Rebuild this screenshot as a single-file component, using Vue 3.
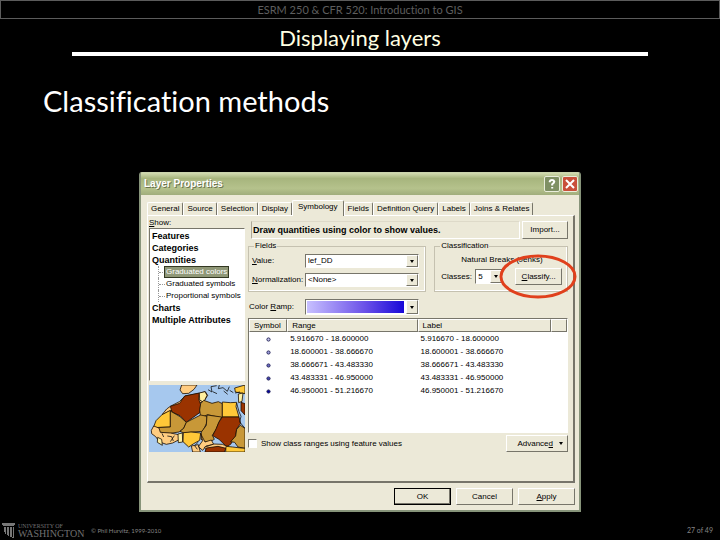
<script setup>
import { ref } from 'vue'

const tabs = ['General', 'Source', 'Selection', 'Display', 'Symbology', 'Fields', 'Definition Query', 'Labels', 'Joins & Relates']
const activeTab = ref('Symbology')

const methods = [
  { name: 'Features' },
  { name: 'Categories' },
  { name: 'Quantities', children: ['Graduated colors', 'Graduated symbols', 'Proportional symbols'] },
  { name: 'Charts' },
  { name: 'Multiple Attributes' },
]
const activeMethod = ref('Graduated colors')

const classes = [
  { color: '#c8c8f0', range: '5.916670 - 18.600000' },
  { color: '#a0a0e0', range: '18.600001 - 38.666670' },
  { color: '#6c6cc8', range: '38.666671 - 43.483330' },
  { color: '#4444b0', range: '43.483331 - 46.950000' },
  { color: '#0000a0', range: '46.950001 - 51.216670' },
]
const showRanges = ref(false)
</script>

<template>
  <div class="slide">
    <header class="course">ESRM 250 &amp; CFR 520: Introduction to GIS</header>
    <h1 class="topic">Displaying layers</h1>
    <h2 class="heading">Classification methods</h2>

    <section class="dialog" aria-labelledby="dialog-title">
      <div class="titlebar">
        <h3 id="dialog-title">Layer Properties</h3>
        <button class="caption help" aria-label="Help">
          <svg viewBox="0 0 14 14"><path d="M4.8 5.2V4.2Q5.2 3 7 3T9.3 4.6Q9.3 5.8 7.2 7.3V8.6M7.2 10v1.6" /></svg>
        </button>
        <button class="caption close" aria-label="Close">
          <svg viewBox="0 0 14 14"><path d="M3 3l8 8M11 3l-8 8" /></svg>
        </button>
      </div>

      <div class="body">
        <nav class="tabs" role="tablist">
          <button
            v-for="t in tabs" :key="t" class="tab" role="tab"
            :class="{ active: t === activeTab }" :aria-selected="t === activeTab" @click="activeTab = t"
          >{{ t }}</button>
        </nav>

        <div class="panel">
          <div class="side">
            <div class="show"><u>S</u>how:</div>
            <ul class="tree">
              <li v-for="m in methods" :key="m.name">
                <button class="node">{{ m.name }}</button>
                <ul v-if="m.children" class="branch">
                  <li v-for="c in m.children" :key="c">
                    <button class="leaf" :class="{ chosen: c === activeMethod }" @click="activeMethod = c">{{ c }}</button>
                  </li>
                </ul>
              </li>
            </ul>
            <svg class="map" viewBox="39 27 288 201" aria-hidden="true">
              <rect x="39" y="27" width="288" height="201" fill="#a6c8ee" />
              <g stroke="#1a0d00" stroke-width="2.400" stroke-linejoin="round">
                <path fill="#ffcc80" d="M137 27L132 42L140 53L158 52L174 40L183 27Z" />
                <path fill="#ffcc80" d="M103 91L130 77L147 60L193 51L208 47L215 58L205 74L165 94L112 101L78 116L92 99Z" />
                <path fill="#ffc838" d="M78 116L103 103V153L52 155L60 134Z" />
                <path fill="#9a3300" d="M103 91L131 82L146 60L190 51L188 69L194 86L191 110L151 139L132 119L108 108Z" />
                <path fill="#fff0a0" d="M190 51L207 47L213 58L203 79L191 72Z" />
                <path fill="#c89838" d="M203 73L228 82L247 77L259 83V126L215 116L194 125L191 102L194 83Z" />
                <path fill="#ffc838" d="M259 78L283 80L302 79L300 92L309 123H259Z" />
                <path fill="#c89838" d="M103 105L132 122L151 139L143 157L129 168L102 172L65 168L53 155L103 153Z" />
                <path fill="#c89838" d="M151 139L194 117L213 121L211 143L200 166L169 168L144 171L132 166L143 157Z" />
                <path fill="#c89838" d="M213 117L257 123L249 138L240 161L229 178L235 190L215 201L195 190L196 168L211 148Z" />
                <path fill="#9a3300" d="M259 123H309L314 142L302 159L299 180L284 205L272 212L249 190L230 179L241 157L248 140Z" />
                <path fill="#ffcc80" d="M53 150L69 156L73 169L103 171L128 176L133 189L110 201L91 205L71 198L59 182L47 173L46 163Z" />
                <path fill="#fff0a0" d="M65 184L77 190L79 208L64 199ZM126 174L139 171L140 198L127 200Z" />
                <path fill="#ffc838" d="M142 170L165 168L194 171L191 193L173 203L158 213L141 197Z" />
                <path fill="#ffcc80" d="M194 173L200 194L187 212L200 223L210 210L233 205L226 192L207 198ZM166 210L187 206L193 228H170Z" />
                <path fill="#c89838" d="M302 160L313 148L327 157V217L306 213L296 199L284 197L299 180Z" />
                <path fill="#ffcc80" d="M205 214L234 204L259 205L277 212L267 220L211 222Z" />
                <path fill="#9a3300" d="M211 216L246 211L270 217L265 228H207ZM315 79L327 83V117L315 104Z" />
                <path fill="#ffc838" d="M270 211L290 213L306 215L327 217V228H269ZM296 36L327 27V53L298 48Z" />
                <path fill="#fff0a0" d="M307 54L321 51L318 76L308 80Z" />
              </g>
              <path fill="none" stroke="#111" stroke-width="2.400" d="M216 41L228 48L225 32L242 29M230 47L243 53M250 27L247 38L261 35L274 46L280 32M263 45L275 55M281 43L292 50M297 51L312 48M78 172L83 183M94 180L107 182L112 195M103 197L115 179M187 198L176 209L184 220M302 81L309 107L315 121L311 138L327 157" />
            </svg>
          </div>

          <div class="main">
            <div class="intro">
              <strong class="lead">Draw quantities using color to show values.</strong>
              <button class="btn">Import...</button>
            </div>

            <div class="groups">
              <fieldset class="group fields">
                <legend>Fields</legend>
                <label for="value"><span><u>V</u>alue:</span></label>
                <div class="combo"><select id="value"><option>lef_DD</option></select><i></i></div>
                <label for="norm"><span><u>N</u>ormalization:</span></label>
                <div class="combo"><select id="norm"><option>&lt;None&gt;</option></select><i></i></div>
              </fieldset>

              <fieldset class="group classification">
                <legend>Classification</legend>
                <div class="method">Natural Breaks (Jenks)</div>
                <div class="count">
                  <label for="classes">Classes:</label>
                  <div class="combo"><select id="classes"><option>5</option></select><i></i></div>
                  <div class="classify">
                    <button class="btn"><span><u>C</u>lassify...</span></button>
                    <svg class="ring" viewBox="0 0 78 45" aria-hidden="true"><ellipse cx="39" cy="22.500" rx="37" ry="20.500" /></svg>
                  </div>
                </div>
              </fieldset>
            </div>

            <div class="ramp">
              <label for="ramp"><span>Color <u>R</u>amp:</span></label>
              <div class="combo"><select id="ramp"><option></option></select><i></i></div>
            </div>

            <div class="list">
              <table>
                <colgroup><col class="c-symbol"><col class="c-range"><col class="c-label"><col class="c-rest"></colgroup>
                <thead>
                  <tr><th>Symbol</th><th>Range</th><th>Label</th><th></th></tr>
                </thead>
                <tbody>
                  <tr v-for="c in classes" :key="c.range">
                    <td class="symbol"><svg viewBox="0 0 5 5"><circle cx="2.500" cy="2.500" r="1.600" :fill="c.color" /></svg></td>
                    <td>{{ c.range }}</td>
                    <td>{{ c.range }}</td>
                    <td></td>
                  </tr>
                </tbody>
              </table>
            </div>

            <div class="options">
              <input id="ranges" v-model="showRanges" type="checkbox">
              <label for="ranges">Show class ranges using feature values</label>
              <button class="btn advanced"><span>Advance<u>d</u></span><i></i></button>
            </div>
          </div>
        </div>

        <div class="actions">
          <button class="btn default">OK</button>
          <button class="btn">Cancel</button>
          <button class="btn"><span><u>A</u>pply</span></button>
        </div>
      </div>
    </section>

    <footer class="footer">
      <svg class="columns" viewBox="0 0 14 16" aria-hidden="true">
        <path d="M0 1h13v2h-1v1H1V3H0zM2 5h2v7H3v-2H2zM5 5h2v9H6v-1H5zM8 5h2v10H8zM11 5h1v11h-2v-1h1z" />
      </svg>
      <div class="brand"><span class="small">UNIVERSITY OF</span><span class="large">WASHINGTON</span></div>
      <span class="copy">© Phil Hurvitz, 1999-2010</span>
      <span class="page">27 of 49</span>
    </footer>
  </div>
</template>

<style>
body { background: #000; }
</style>

<style scoped>
* { box-sizing: border-box; }
.slide {
  display: flex;
  flex-direction: column;
  min-height: 100vh;
  background: #000;
  color: #fff;
  font-family: Lato, sans-serif;
  font-variant-ligatures: none;
}
h1, h2, h3, ul { margin: 0; padding: 0; font-weight: 400; list-style: none; }
.course {
  height: 19px;
  border: 1px solid #5c5c5c;
  color: #5e5e5e;
  font-size: 11px;
  line-height: 17px;
  text-align: center;
}
.topic {
  margin: 0 10%;
  padding-top: 5px;
  border-bottom: 4px solid #fff;
  color: #ffffe2;
  font-size: 22px;
  line-height: 28px;
  text-align: center;
}
.heading { padding: 26px 43px 0; font-size: 29px; line-height: 38px; }

.dialog {
  margin: 52px 139px 0;
  border: 2px solid #87947a;
  border-top: 1px solid #cbd4ad;
  border-radius: 3px 3px 0 0;
  background: #ece9d8;
  color: #000;
  font: 8px/10px "Liberation Sans", sans-serif;
}
button, select { font: inherit; color: inherit; }
button { margin: 0; padding: 0; border: 0; background: none; white-space: nowrap; }
.titlebar {
  display: flex;
  align-items: center;
  gap: 2px;
  height: 22px;
  padding: 0 1px 0 3px;
  background: linear-gradient(#d2dbb0, #a7b57d 25%, #b5c28c 70%, #a0ad7c);
}
.titlebar h3 { flex: 1; color: #fff; font-size: 10px; font-weight: 700; text-shadow: 1px 1px #6b7450; }
.caption { width: 16px; height: 16px; border: 1px solid #e9eddb; border-radius: 2px; }
.caption svg { display: block; width: 14px; height: 14px; fill: none; stroke: #fff; stroke-width: 2; }
.help { background: #7f9064; }
.close { background: #c9503a; }

.body { padding: 5px 4px 5px 6px; }
.tabs { display: flex; align-items: flex-end; height: 15px; }
.tab {
  height: 13px;
  padding: 0 3px;
  border: 1px solid #fff;
  border-right-color: #77756a;
  border-bottom: 0;
  border-radius: 2px 2px 0 0;
}
.tab.active { height: 16px; margin-bottom: -1px; padding: 0 5px 3px; background: #ece9d8; }
.panel {
  display: grid;
  grid-template-columns: 3fr 10fr;
  gap: 3px;
  padding: 0 5px 29px 1px;
  border: 1px solid #fff;
  border-right: 2px solid #77756a;
  border-bottom: 2px solid #77756a;
}
.side { display: flex; flex-direction: column; min-width: 0; padding-top: 2px; }
.tree {
  flex: 1;
  margin-bottom: 4px;
  padding: 1px 0 0 2px;
  border: 1px solid #77756a;
  border-right-color: #fff;
  border-bottom-color: #fff;
  background: #fff;
}
.tree button { display: block; height: 12px; line-height: 12px; }
.tree .node { font-size: 9px; font-weight: 700; }
.branch { margin-left: 6px; }
.branch li { display: flex; border-left: 1px dotted #999; }
.branch li::before { content: ""; width: 6px; height: 6px; border-bottom: 1px dotted #999; }
.tree .leaf { height: 10px; margin: 1px 0; padding: 0 1px; line-height: 10px; }
.tree .chosen { background: #8f9777; color: #fff; box-shadow: 0 0 0 1px #333822; }
.map { display: block; width: 100%; }

.main { display: flex; flex-direction: column; min-width: 0; padding-top: 5px; }
.intro { display: flex; gap: 2px; height: 18px; margin-bottom: 3px; }
.lead {
  flex: 1;
  margin-left: 3px;
  padding-left: 1px;
  border: 1px solid #fff;
  border-left-color: #aca899;
  border-top-color: #dedac9;
  font-size: 9px;
  line-height: 17px;
}
.btn {
  border: 1px solid #fff;
  border-right-color: #77756a;
  border-bottom-color: #77756a;
  background: #ece9d8;
  text-align: center;
}
.intro .btn { width: 46px; }
.groups { display: grid; grid-template-columns: 4fr 3fr; gap: 8px; }
.group { min-width: 0; margin: 0; padding: 4px 6px 4px 3px; border: 1px solid #c5c1b0; box-shadow: inset -1px -1px #fff; }
.group legend { margin-left: 2px; padding: 0 1px; line-height: 8px; }
.fields { display: grid; grid-template-columns: 53px 1fr; gap: 5px 0; align-items: center; }
.combo {
  position: relative;
  display: flex;
  height: 14px;
  border: 1px solid #77756a;
  border-right-color: #fff;
  border-bottom-color: #fff;
  background: #fff;
}
.combo select { flex: 1; min-width: 0; padding: 0 2px; border: 0; background: transparent; appearance: none; }
.combo i {
  position: absolute;
  inset: 0 0 0 auto;
  display: grid;
  place-items: center;
  width: 12px;
  border: 1px solid #fff;
  border-right-color: #77756a;
  border-bottom-color: #77756a;
  background: #ece9d8;
  pointer-events: none;
}
.combo i::after, .advanced i::after { content: ""; border: 2px solid transparent; border-top: 3px solid #000; border-bottom: 0; }
.group.classification { padding: 4px 5px 4px 6px; }
.group.classification legend { margin-left: -1px; }
.method { padding-left: 20px; line-height: 12px; }
.count { display: flex; align-items: center; gap: 5px; padding-top: 2px; }
.count label { width: 29px; }
.count .combo { width: 28px; height: 15px; }
.classify { position: relative; flex: 1; margin-left: 7px; height: 17px; }
.classify .btn { width: 100%; height: 17px; }
.ring { position: absolute; top: -14px; left: -16px; width: 78px; height: 45px; pointer-events: none; }
.ring ellipse { fill: none; stroke: #e0401c; stroke-width: 3; }
.ramp { display: grid; grid-template-columns: 56px 114px; align-items: center; padding: 7px 0 3px 1px; }
.ramp .combo { height: 16px; }
.ramp select { margin: 1px 14px 1px 1px; background: linear-gradient(90deg, #c8c0ff, #6a50e8 60%, #1808d8); }

.list { flex: 1; min-height: 115px; border: 1px solid #77756a; border-right-color: #fff; border-bottom-color: #fff; background: #fff; }
table { width: 100%; border-collapse: separate; border-spacing: 0; table-layout: fixed; }
.c-symbol { width: 12%; }
.c-range { width: 41%; }
.c-label { width: 42%; }
.c-rest { width: 5%; }
th {
  height: 13px;
  padding: 0 4px;
  border: 1px solid #fff;
  border-right-color: #77756a;
  border-bottom-color: #77756a;
  background: #ece9d8;
  font-weight: 400;
  text-align: left;
}
td { height: 13px; padding: 1px 3px 0; }
.symbol { text-align: center; }
.symbol svg { display: block; width: 5px; height: 5px; margin: 0 auto; }
.symbol circle { stroke: #28285c; stroke-width: 1; }
.options { display: flex; align-items: center; gap: 4px; padding-top: 2px; }
.options input {
  width: 9px;
  height: 9px;
  margin: 0;
  border: 1px solid #77756a;
  border-right-color: #fff;
  border-bottom-color: #fff;
  background: #fff;
  appearance: none;
}
.options input:checked { background: #444; }
.options label { flex: 1; }
.advanced { display: flex; align-items: center; justify-content: flex-end; gap: 6px; width: 62px; height: 17px; padding-right: 4px; }
.advanced i { display: grid; }
.actions { display: flex; justify-content: flex-end; gap: 5px; padding-top: 5px; }
.actions .btn { width: 57px; height: 17px; }
.actions .default { border: 1px solid #000; box-shadow: inset -1px -1px #77756a; }

.footer { display: flex; align-items: center; height: 20px; margin-top: auto; padding: 0 7px 0 2px; color: #858585; }
.columns { width: 14px; height: 16px; margin-right: 2px; fill: #777; }
.brand { display: flex; flex-direction: column; width: 73px; color: #707070; font-family: "Liberation Serif", serif; }
.small { font-size: 6px; line-height: 6px; }
.large { font-size: 10px; line-height: 9px; }
.copy { font-size: 6px; }
.page { margin-left: auto; font-size: 7px; }
</style>
